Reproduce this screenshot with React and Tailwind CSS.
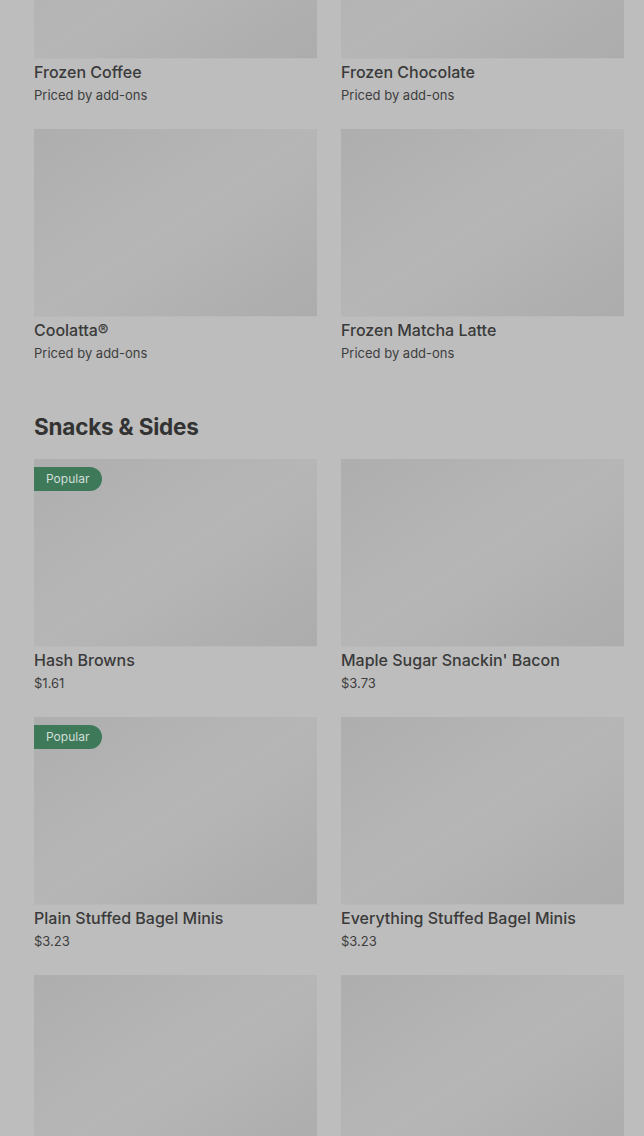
import React from 'react'

const frozen = [
  { name: 'Frozen Coffee', price: 'Priced by add-ons' },
  { name: 'Frozen Chocolate', price: 'Priced by add-ons' },
  { name: 'Coolatta®', price: 'Priced by add-ons' },
  { name: 'Frozen Matcha Latte', price: 'Priced by add-ons' },
]

// last two sit below the fold, only their photos show
const snacks = [
  { name: 'Hash Browns', price: '$1.61', popular: true },
  { name: "Maple Sugar Snackin' Bacon", price: '$3.73' },
  { name: 'Plain Stuffed Bagel Minis', price: '$3.23', popular: true },
  { name: 'Everything Stuffed Bagel Minis', price: '$3.23' },
  { id: 'next-1' },
  { id: 'next-2' },
]

function ItemCard({ item }) {
  return (
    <div className="h-[258px]">
      <div className="relative h-[188px] border-b border-[#b9b9b9] bg-gradient-to-br from-[#aeaeae] via-[#b6b6b6] to-[#acacac]">
        {item.popular && (
          <span className="absolute left-0 top-2 flex h-6 items-center rounded-r-full bg-[#3e7a5a] pl-3 pr-[13px] text-[12px] text-[#d3ded8]">
            Popular
          </span>
        )}
      </div>
      {item.name && (
        <>
          <div className="mt-px text-[16px] font-medium leading-6 text-[#3a3a3a]">{item.name}</div>
          <div className="text-[13px] leading-[22px] text-[#3d3d3d]">{item.price}</div>
        </>
      )}
    </div>
  )
}

export default function App() {
  return (
    <div
      className="h-[1136px] overflow-hidden bg-[#bdbdbd] pl-[34px] pr-5"
      style={{ fontFamily: 'Inter, "Liberation Sans", sans-serif' }}
    >
      <div className="mt-[-129px]">
        <section className="grid grid-cols-2 gap-x-6">
          {frozen.map((item) => (
            <ItemCard key={item.name} item={item} />
          ))}
        </section>
        <section className="mt-6">
          <h2 className="mb-4 text-[22.5px] font-bold leading-8 tracking-[-0.2px] text-[#333333]">
            Snacks &amp; Sides
          </h2>
          <div className="grid grid-cols-2 gap-x-6">
            {snacks.map((item) => (
              <ItemCard key={item.name || item.id} item={item} />
            ))}
          </div>
        </section>
      </div>
    </div>
  )
}
